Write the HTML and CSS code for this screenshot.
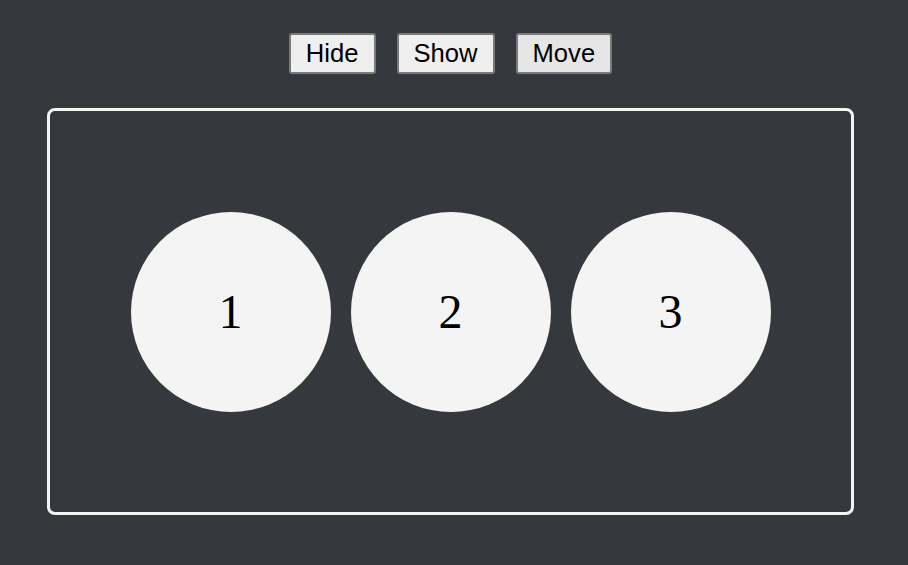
FILE: index.html
```html
<!DOCTYPE html>
<html>
<head>
<meta charset="utf-8">
<link rel="stylesheet" href="styles.css">
</head>
<body>
<div class="page">
  <div class="controls">
    <button class="btn">Hide</button>
    <button class="btn">Show</button>
    <button class="btn btn-active">Move</button>
  </div>
  <div class="stage">
    <div class="circle">1</div>
    <div class="circle">2</div>
    <div class="circle">3</div>
  </div>
</div>
</body>
</html>
```
FILE: styles.css
```css
html, body {
  margin: 0;
  padding: 0;
  background: #35383d;
  height: 100%;
}
.page {
  width: 807px;
  margin-left: 47px;
  padding-top: 33px;
}
.controls {
  display: flex;
  justify-content: center;
  gap: 21px;
  height: 41px;
}
.btn {
  font-family: "Liberation Sans", Arial, sans-serif;
  font-size: 25.6px;
  line-height: 29px;
  height: 41px;
  padding: 4px 15px;
  border: 2px solid #7a7a7a;
  border-radius: 3px;
  background: #efefef;
  color: #000;
}
.btn-active {
  background: #e6e6e6;
}
.stage {
  margin-top: 34px;
  box-sizing: border-box;
  height: 407px;
  border: 3px solid #f4f4f4;
  border-radius: 8px;
  display: flex;
  align-items: center;
  justify-content: center;
  gap: 20px;
}
.circle {
  width: 200px;
  height: 200px;
  border-radius: 50%;
  background: #f4f4f4;
  display: flex;
  align-items: center;
  justify-content: center;
  font-family: "Liberation Serif", "Times New Roman", serif;
  font-size: 48px;
  color: #000;
}
```
